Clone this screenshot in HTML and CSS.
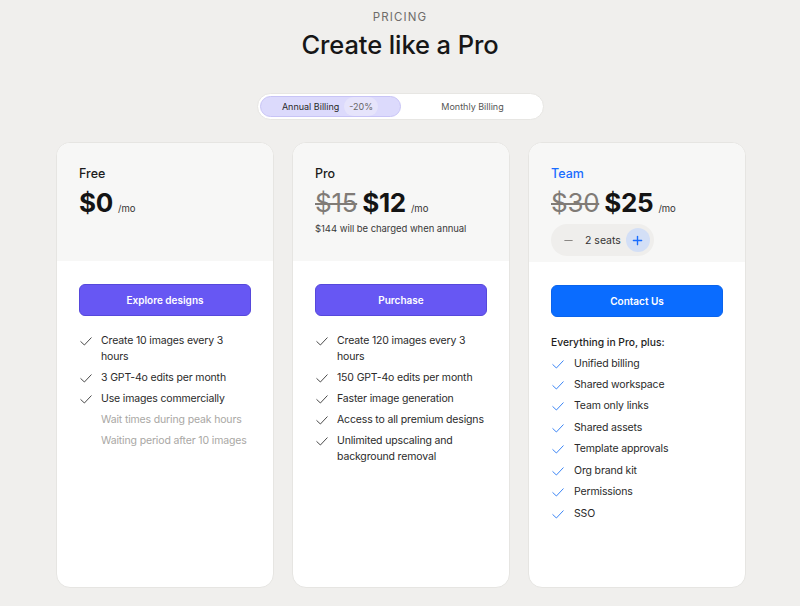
FILE: index.html
```html
<!DOCTYPE html>
<html lang="en">
<head>
<meta charset="utf-8">
<title>Pricing</title>
<link rel="stylesheet" href="styles.css">
</head>
<body>
<main class="page">
  <header class="intro">
    <div class="eyebrow">PRICING</div>
    <h1 class="title">Create like a Pro</h1>
  </header>

  <div class="toggle">
    <button class="seg seg-active">Annual Billing <span class="discount">-20%</span></button>
    <button class="seg seg-month">Monthly Billing</button>
  </div>

  <section class="cards">
    <article class="card">
      <div class="card-head">
        <div class="plan">Free</div>
        <div class="price-row"><span class="price">$0</span><span class="per">/mo</span></div>
      </div>
      <div class="card-body">
        <button class="btn btn-purple">Explore designs</button>
        <ul class="features">
          <li><svg class="check" viewBox="0 0 12 9"><polyline points="0.8,4.6 4.4,8 11.2,0.8"/></svg><span>Create 10 images every 3 hours</span></li>
          <li><svg class="check" viewBox="0 0 12 9"><polyline points="0.8,4.6 4.4,8 11.2,0.8"/></svg><span>3 GPT-4o edits per month</span></li>
          <li><svg class="check" viewBox="0 0 12 9"><polyline points="0.8,4.6 4.4,8 11.2,0.8"/></svg><span>Use images commercially</span></li>
          <li class="off"><span class="nocheck"></span><span>Wait times during peak hours</span></li>
          <li class="off"><span class="nocheck"></span><span>Waiting period after 10 images</span></li>
        </ul>
      </div>
    </article>

    <article class="card">
      <div class="card-head">
        <div class="plan">Pro</div>
        <div class="price-row"><span class="price old">$15</span><span class="price">$12</span><span class="per">/mo</span></div>
        <div class="note">$144 will be charged when annual</div>
      </div>
      <div class="card-body">
        <button class="btn btn-purple">Purchase</button>
        <ul class="features">
          <li><svg class="check" viewBox="0 0 12 9"><polyline points="0.8,4.6 4.4,8 11.2,0.8"/></svg><span>Create 120 images every 3 hours</span></li>
          <li><svg class="check" viewBox="0 0 12 9"><polyline points="0.8,4.6 4.4,8 11.2,0.8"/></svg><span>150 GPT-4o edits per month</span></li>
          <li><svg class="check" viewBox="0 0 12 9"><polyline points="0.8,4.6 4.4,8 11.2,0.8"/></svg><span>Faster image generation</span></li>
          <li><svg class="check" viewBox="0 0 12 9"><polyline points="0.8,4.6 4.4,8 11.2,0.8"/></svg><span>Access to all premium designs</span></li>
          <li><svg class="check" viewBox="0 0 12 9"><polyline points="0.8,4.6 4.4,8 11.2,0.8"/></svg><span>Unlimited upscaling and background removal</span></li>
        </ul>
      </div>
    </article>

    <article class="card">
      <div class="card-head">
        <div class="plan plan-blue">Team</div>
        <div class="price-row"><span class="price old">$30</span><span class="price">$25</span><span class="per">/mo</span></div>
        <div class="seats">
          <button class="seat-btn minus"><svg viewBox="0 0 12 12"><line x1="2" y1="6" x2="10" y2="6"/></svg></button>
          <span class="seat-label">2 seats</span>
          <button class="seat-btn plus"><svg viewBox="0 0 12 12"><line x1="1.5" y1="6" x2="10.5" y2="6"/><line x1="6" y1="1.5" x2="6" y2="10.5"/></svg></button>
        </div>
      </div>
      <div class="card-body">
        <button class="btn btn-blue">Contact Us</button>
        <div class="plus-head">Everything in Pro, plus:</div>
        <ul class="features team">
          <li><svg class="check" viewBox="0 0 12 9"><polyline points="0.8,4.6 4.4,8 11.2,0.8"/></svg><span>Unified billing</span></li>
          <li><svg class="check" viewBox="0 0 12 9"><polyline points="0.8,4.6 4.4,8 11.2,0.8"/></svg><span>Shared workspace</span></li>
          <li><svg class="check" viewBox="0 0 12 9"><polyline points="0.8,4.6 4.4,8 11.2,0.8"/></svg><span>Team only links</span></li>
          <li><svg class="check" viewBox="0 0 12 9"><polyline points="0.8,4.6 4.4,8 11.2,0.8"/></svg><span>Shared assets</span></li>
          <li><svg class="check" viewBox="0 0 12 9"><polyline points="0.8,4.6 4.4,8 11.2,0.8"/></svg><span>Template approvals</span></li>
          <li><svg class="check" viewBox="0 0 12 9"><polyline points="0.8,4.6 4.4,8 11.2,0.8"/></svg><span>Org brand kit</span></li>
          <li><svg class="check" viewBox="0 0 12 9"><polyline points="0.8,4.6 4.4,8 11.2,0.8"/></svg><span>Permissions</span></li>
          <li><svg class="check" viewBox="0 0 12 9"><polyline points="0.8,4.6 4.4,8 11.2,0.8"/></svg><span>SSO</span></li>
        </ul>
      </div>
    </article>
  </section>
</main>
</body>
</html>
```

FILE: styles.css
```css
* { box-sizing: border-box; }

html, body {
  margin: 0;
  padding: 0;
  background: #f0efed;
  font-family: Inter, "Noto Sans", "Liberation Sans", sans-serif;
  color: #1b1b1b;
  height: 100%;
  overflow: hidden;
}

.page {
  display: flex;
  flex-direction: column;
  align-items: center;
  padding-top: 10px;
}

.intro {
  display: flex;
  flex-direction: column;
  align-items: center;
}

.eyebrow {
  font-size: 11.5px;
  line-height: 15px;
  letter-spacing: 1.1px;
  color: #6e6c6a;
}

.title {
  margin: 5px 0 0;
  font-size: 25.5px;
  line-height: 30px;
  font-weight: 500;
  letter-spacing: -0.1px;
  color: #161616;
}

.toggle {
  margin-top: 33px;
  width: 287px;
  height: 27px;
  background: #ffffff;
  border: 1px solid #e7e6e3;
  border-radius: 14px;
  padding: 2px;
  display: flex;
}

.seg {
  flex: 1;
  border: 1px solid transparent;
  background: transparent;
  border-radius: 12px;
  font-family: inherit;
  font-size: 9px;
  color: #555;
  display: flex;
  align-items: center;
  justify-content: center;
  gap: 5px;
  padding: 0;
}

.seg-month {
  padding-left: 4px;
}

.seg-active {
  flex: 0 0 141px;
  background: #dcdafc;
  border-color: #c8c4f6;
  color: #2a2a2a;
  padding-left: 0;
}

.discount {
  background: #e6e4fb;
  color: #666;
  border-radius: 10px;
  padding: 4px 5px;
  font-size: 9px;
}

.cards {
  margin-top: 22px;
  margin-left: 2px;
  display: grid;
  grid-template-columns: repeat(3, 218px);
  gap: 18px;
}

.card {
  height: 446px;
  background: #ffffff;
  border: 1px solid #e6e5e2;
  border-radius: 14px;
  overflow: hidden;
  display: flex;
  flex-direction: column;
}

.card-head {
  background: #f7f7f6;
  min-height: 118px;
  padding: 23px 22px 6px;
  display: flex;
  flex-direction: column;
}

.plan {
  font-size: 12.5px;
  line-height: 16px;
  font-weight: 500;
  color: #1c1c1c;
}

.plan-blue { color: #1a6dff; }

.price-row {
  margin-top: 5px;
  display: flex;
  align-items: baseline;
  gap: 5px;
  height: 32px;
}

.price {
  font-size: 26px;
  line-height: 32px;
  font-weight: 700;
  letter-spacing: -0.3px;
  color: #141414;
}

.price.old {
  font-weight: 400;
  color: #807b76;
  text-decoration: line-through;
  text-decoration-thickness: 1.5px;
}

.per {
  font-size: 9.5px;
  color: #333;
  margin-left: 0;
}

.note {
  margin-top: 3px;
  font-size: 9.5px;
  line-height: 14px;
  letter-spacing: -0.05px;
  color: #3a3a3a;
}

.seats {
  margin-top: 5px;
  align-self: flex-start;
  display: flex;
  align-items: center;
  gap: 5px;
  height: 32px;
  padding: 0 4px 0 5px;
  background: #efeeec;
  border-radius: 16px;
}

.seat-btn {
  width: 24px;
  height: 24px;
  border: none;
  border-radius: 50%;
  padding: 0;
  display: flex;
  align-items: center;
  justify-content: center;
  background: transparent;
}

.seat-btn svg {
  width: 11px;
  height: 11px;
  fill: none;
  stroke-width: 1.3;
  stroke-linecap: round;
}

.minus svg { stroke: #8a8784; }

.plus {
  background: #d3dff6;
}

.plus svg {
  stroke: #1a6dff;
  stroke-width: 1.5;
}

.seat-label {
  font-size: 10.5px;
  color: #333;
}

.card-body {
  padding: 23px 22px 0;
  display: flex;
  flex-direction: column;
}

.btn {
  height: 32px;
  border-radius: 6px;
  font-family: inherit;
  font-size: 10px;
  font-weight: 600;
  color: #fff;
  padding: 0;
}

.btn-purple {
  background: #6757f3;
  border: 1px solid #5648db;
}

.btn-blue {
  background: #0a6cff;
  border: 1px solid #0a64ec;
}

.features {
  list-style: none;
  margin: 17px 0 0;
  padding: 0;
  display: flex;
  flex-direction: column;
  gap: 5px;
}

.features li {
  display: flex;
  align-items: flex-start;
  gap: 9px;
  font-size: 10.5px;
  letter-spacing: -0.15px;
  line-height: 16px;
  color: #2a2a2a;
}

.features li.off { color: #a9a7a4; }

.check {
  flex: none;
  width: 12px;
  height: 9px;
  margin-top: 4px;
  margin-left: 1px;
  fill: none;
  stroke: #4a4a4a;
  stroke-width: 1;
  stroke-linecap: round;
  stroke-linejoin: round;
}

.nocheck {
  flex: none;
  width: 12px;
  margin-left: 1px;
}

.plus-head {
  margin-top: 17px;
  font-size: 10.3px;
  line-height: 16px;
  font-weight: 500;
  color: #1e1e1e;
}

.features.team {
  margin-top: 5.5px;
  gap: 5.45px;
}

.features.team li { gap: 10px; }

.features.team .check { stroke: #3d86f5; }
```
